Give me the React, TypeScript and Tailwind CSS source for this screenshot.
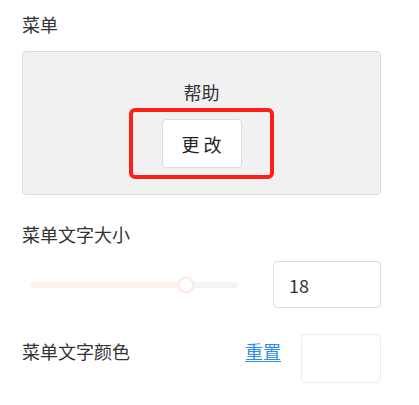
import { useState } from 'react';

const FONT = { fontFamily: '"Noto Sans CJK SC", "Noto Sans", sans-serif' };

export default function App() {
  const [size, setSize] = useState(18);
  const pct = 75;

  return (
    <div
      className="w-[419px] h-[405px] bg-white pl-[22px] pr-[38px] pt-[12px] text-[18px] leading-[24px] text-[#333]"
      style={FONT}
    >
      <div>菜单</div>

      <div className="mt-[15px] h-[144px] rounded border border-[#dcdcdc] bg-[#f0f1f0] flex flex-col items-center pt-[28px]">
        <div>帮助</div>
        <div className="mt-[4px] w-[145px] h-[71px] border-4 border-[#ff1f17] rounded-[6px] flex items-center justify-center">
          <button className="w-[80px] h-[49px] bg-white border border-[#dcdcdc] rounded text-[18px] text-[#222]">
            更 改
          </button>
        </div>
      </div>

      <div className="mt-[27px]">菜单文字大小</div>

      <div className="mt-[15px] flex items-center justify-between">
        <div className="ml-[8px] w-[208px] h-[6px] rounded-full bg-[#f3f3f3] relative">
          <div className="h-full rounded-full bg-[#fff0ec]" style={{ width: `${pct}%` }} />
          <div
            className="absolute top-1/2 -translate-x-1/2 -translate-y-1/2 w-[17px] h-[17px] rounded-full bg-white border-2 border-[#fde6e0]"
            style={{ left: `${pct}%` }}
          />
        </div>
        <input
          value={size}
          onChange={(e) => setSize(Number(e.target.value) || 0)}
          className="w-[108px] h-[47px] rounded border border-[#dcdcdc] px-[15px] text-[18px] text-[#333] outline-none"
          style={FONT}
        />
      </div>

      <div className="mt-[26px] flex items-start justify-between">
        <div className="mt-[5px]">菜单文字颜色</div>
        <div className="flex items-start gap-[20px]">
          <a href="#" className="mt-[5px] text-[#2d8cf0] underline underline-offset-2">
            重置
          </a>
          <div className="w-[80px] h-[49px] rounded border border-[#ebebf2] bg-white" />
        </div>
      </div>
    </div>
  );
}
